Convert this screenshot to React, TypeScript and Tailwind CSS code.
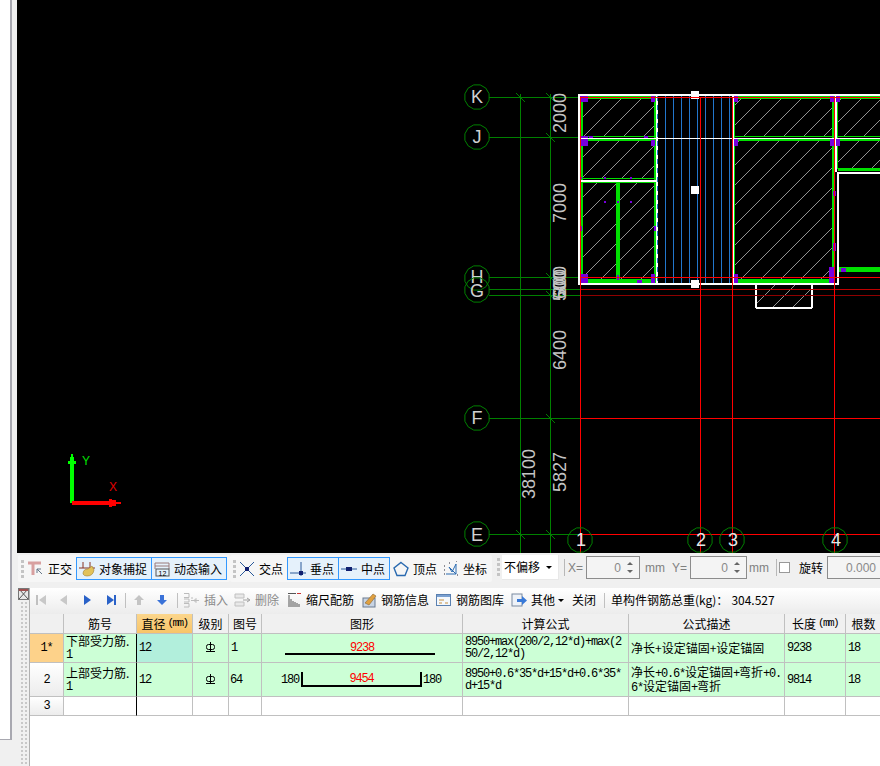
import type { ReactNode } from 'react';

const mono = "font-['Liberation_Mono',monospace] tracking-[-1.2px]";

function gon(cx: number, cy: number, r: number) {
  const pts: string[] = [];
  for (let i = 0; i < 12; i++) {
    const a = (Math.PI * 2 * i) / 12 + 0.26;
    pts.push(`${(cx + r * Math.cos(a)).toFixed(1)},${(cy + r * Math.sin(a)).toFixed(1)}`);
  }
  return pts.join(' ');
}

const rowAxes: [string, number, number][] = [
  ['K', 97, 103],
  ['J', 137, 143],
  ['H', 278, 283],
  ['G', 290, 297],
  ['F', 418, 424],
  ['E', 534, 541],
];
const colAxes: [string, number][] = [
  ['1', 580],
  ['2', 700],
  ['3', 732],
  ['4', 835],
];
const purple: number[][] = [
  [580, 96, 8, 6], [651, 96, 4, 6], [580, 136, 8, 10], [651, 140, 4, 6], [589, 136, 4, 2], [644, 136, 4, 2],
  [580, 177, 2, 2], [604, 177, 2, 2], [630, 177, 2, 2], [604, 201, 2, 2], [617, 201, 2, 2], [630, 201, 2, 2],
  [580, 226, 2, 5], [654, 226, 2, 5], [580, 274, 8, 9], [651, 274, 4, 9], [617, 275, 2, 5], [637, 280, 5, 3],
  [734, 96, 4, 6], [830, 96, 4, 6], [836, 96, 4, 6], [734, 139, 4, 7], [830, 139, 4, 7], [836, 139, 4, 7],
  [833, 191, 3, 5], [833, 243, 3, 8], [734, 274, 4, 9], [829, 267, 5, 16], [841, 268, 5, 4],
];
const green: number[][] = [
  [581, 96, 75, 3], [581, 97, 2, 186], [654, 97, 2, 186], [581, 136, 75, 1], [581, 139, 75, 2], [581, 178, 75, 1],
  [581, 182, 75, 1], [616, 182, 4, 98], [581, 279, 75, 4], [733, 96, 147, 3], [733, 97, 2, 186], [832, 97, 2, 186],
  [837, 97, 1, 72], [733, 136, 147, 1], [733, 139, 147, 2], [838, 168, 42, 3], [838, 267, 42, 5], [738, 279, 91, 4],
];
const white: number[][] = [
  [578, 94, 302, 2], [578, 94, 2, 190], [656, 94, 2, 190], [732, 94, 2, 190], [578, 138, 302, 1], [580, 180, 76, 2],
  [578, 283, 260, 2], [835, 94, 2, 78], [837, 172, 2, 113], [837, 172, 43, 2], [755, 285, 2, 23], [811, 285, 2, 23],
  [756, 307, 56, 2], [691, 91, 8, 3], [691, 96, 8, 3], [691, 186, 8, 8], [691, 280, 8, 3], [691, 285, 8, 3],
];
const hatch: number[][] = [
  [583, 99, 71, 37], [583, 141, 71, 37], [583, 183, 33, 96], [620, 183, 34, 96], [735, 99, 97, 37], [735, 141, 97, 138],
  [838, 99, 42, 37], [838, 141, 42, 27], [757, 285, 54, 22],
];
const dims: [string, number, number][] = [
  ['2000', 560, 113], ['7000', 560, 203], ['600', 560, 284], ['300', 560, 281], ['500', 560, 286], ['6400', 560, 350], ['5827', 560, 472], ['38100', 529, 474],
];
const ticks: [number, number][] = [[520, 97], [550, 97], [550, 137], [550, 277], [550, 295], [550, 418], [550, 534], [520, 534]];

function Drawing() {
  return (
    <svg className="block" width="863" height="553" viewBox="17 0 863 553">
      <defs>
        <pattern id="hatch" patternUnits="userSpaceOnUse" width="20" height="20">
          <path d="M0 20 L20 0" stroke="#b8b8b8" strokeWidth="0.8" />
        </pattern>
      </defs>
      {hatch.map(([x, y, w, h], i) => <rect key={i} x={x} y={y} width={w} height={h} fill="url(#hatch)" />)}
      {[665, 673, 681, 689, 697, 705, 713, 721, 729].map((x) => <rect key={x} x={x} y={96} width={1} height={187} fill="#2277cc" />)}
      {[97, 137, 277, 289, 295, 418, 534].map((y) => <rect key={y} x={489} y={y} width={91} height={1} fill="#008000" />)}
      <rect x={520} y={94} width={1} height={459} fill="#008000" />
      <rect x={550} y={94} width={1} height={459} fill="#008000" />
      {ticks.map(([x, y], i) => <line key={i} x1={x - 4} y1={y - 4} x2={x + 5} y2={y + 5} stroke="#008000" />)}
      {green.map(([x, y, w, h], i) => <rect key={i} x={x} y={y} width={w} height={h} fill="#00e000" />)}
      {white.map(([x, y, w, h], i) => <rect key={i} x={x} y={y} width={w} height={h} fill="#ffffff" />)}
      <line x1="657.5" y1="96" x2="657.5" y2="283" stroke="#2277cc" strokeDasharray="5 4" />
      {purple.map(([x, y, w, h], i) => <rect key={i} x={x} y={y} width={w} height={h} fill="#7700dd" />)}
      {[97, 277, 418, 534].map((y) => <rect key={y} x={580} y={y} width={300} height={1} fill="#ff0000" />)}
      <rect x={580} y={289} width={300} height={1} fill="#c00000" />
      <rect x={580} y={295} width={300} height={1} fill="#900000" />
      <rect x={578} y={138} width={302} height={1} fill="#ffffff" />
      {[580, 700, 732, 834].map((x) => <rect key={x} x={x} y={97} width={1} height={456} fill="#ff0000" />)}
      {dims.map(([t, x, y]) => (
        <text key={t} x={x} y={y} transform={`rotate(-90 ${x} ${y})`} textAnchor="middle" dominantBaseline="central" fill="#c4c4c4" fontSize="18" fontFamily="Liberation Sans, sans-serif">{t}</text>
      ))}
      {rowAxes.map(([t, y, base]) => (
        <g key={t}>
          <polygon points={gon(477, y, 12.5)} fill="none" stroke="#008000" />
          <text x={477} y={base} textAnchor="middle" fill="#d0d0d0" fontSize="18" fontFamily="Liberation Sans, sans-serif">{t}</text>
        </g>
      ))}
      {colAxes.map(([t, x]) => (
        <g key={t}>
          <polygon points={gon(x, 540, 12.5)} fill="none" stroke="#008000" />
          <text x={x + 1} y={546} textAnchor="middle" fill="#e0e8e8" fontSize="18" fontFamily="Liberation Sans, sans-serif">{t}</text>
        </g>
      ))}
      <path d="M70 503 V464 H68 V461 H70 V457 H71 V454 H73 V457 H74 V461 H76 V464 H74 V503 Z" fill="#00ff00" />
      <path d="M72 501 H109 V499 H112 V500 H116 V502 H121 V504 H116 V506 H112 V507 H109 V505 H72 Z" fill="#ff0000" />
      <text x={86} y={465} textAnchor="middle" fill="#00e000" fontSize="12" fontFamily="Liberation Sans, sans-serif">Y</text>
      <text x={113} y={491} textAnchor="middle" fill="#e00000" fontSize="12" fontFamily="Liberation Sans, sans-serif">X</text>
    </svg>
  );
}

function Grip() {
  return (
    <div className="flex flex-col gap-[2px] w-[3px] shrink-0">
      <span className="h-[3px] bg-[#c4c4c4]" />
      <span className="h-[3px] bg-[#c4c4c4]" />
      <span className="h-[3px] bg-[#c4c4c4]" />
      <span className="h-[3px] bg-[#c4c4c4]" />
    </div>
  );
}

function Ico({ children, w = 16 }: { children: ReactNode; w?: number }) {
  return (
    <svg width={w} height="16" viewBox={`0 0 ${w} 16`} className="block shrink-0" fill="none">
      {children}
    </svg>
  );
}

function Btn({ icon, label, className, active }: { icon: ReactNode; label: string; className: string; active?: boolean }) {
  return (
    <div className={`flex items-center h-[23px] gap-[4px] shrink-0 ${active ? 'border border-[#3399ff] bg-[#e5f1fb] pl-[2px]' : ''} ${className}`}>
      {icon}
      <span className="whitespace-nowrap">{label}</span>
    </div>
  );
}

function Spinner({ value, className }: { value: string; className: string }) {
  return (
    <div className={`flex items-center h-[23px] border border-[#8c8c8c] bg-[#f4f4f4] text-[#8a8a8a] shrink-0 ${className}`}>
      <span className="text-[12px] font-['Liberation_Sans',sans-serif]">{value}</span>
      <div className="flex flex-col gap-[5px] w-[18px] items-center">
        <span className="w-0 h-0 border-x-[3px] border-x-transparent border-b-[3px] border-b-[#666]" />
        <span className="w-0 h-0 border-x-[3px] border-x-transparent border-t-[3px] border-t-[#666]" />
      </div>
    </div>
  );
}

function TopToolbar() {
  return (
    <div className="flex items-start h-[35px] pt-[2px] bg-[#f0f0f0] text-[12px] text-black">
      <div className="flex items-center h-[27px] w-[212px] ml-px pl-[3px] bg-[#f6f6f6] rounded-[2px] shrink-0">
        <Grip />
        <Btn
          className="ml-[4px] w-[48px]"
          label="正交"
          icon={
            <Ico>
              <path d="M0 2 H13 M5 2 V14" stroke="#d8a0a0" strokeWidth="3" />
              <path d="M9 8 L14 13 M9 8 V12 M9 8 H13" stroke="#667788" />
            </Ico>
          }
        />
        <Btn
          active
          className="w-[76px]"
          label="对象捕捉"
          icon={
            <Ico>
              <path d="M0 7 H16 M4 1 V7 M11 1 V7" stroke="#883322" />
              <path d="M4 13 Q4 8 9 8 L13 5 L15 9 Q14 15 8 15 Q5 15 4 13 Z" fill="#e2c25a" stroke="#a08030" strokeWidth="0.6" />
            </Ico>
          }
        />
        <Btn
          active
          className="-ml-px w-[76px]"
          label="动态输入"
          icon={
            <Ico>
              <path d="M1 2 H15 M1 5 H15 M1 2 V8 M15 2 V8" stroke="#9a7a7a" />
              <rect x="2" y="8" width="13" height="7" stroke="#555" />
              <text x="8.5" y="14.5" textAnchor="middle" fontSize="7" fill="#000" fontFamily="Liberation Sans, sans-serif">12</text>
            </Ico>
          }
        />
      </div>
      <div className="flex items-center h-[27px] w-[262px] pl-[3px] bg-[#f6f6f6] rounded-[2px] shrink-0">
        <Grip />
        <Btn
          className="ml-[3px] w-[48px]"
          label="交点"
          icon={
            <Ico>
              <path d="M1 1 L15 15 M15 1 L1 15" stroke="#2a5a9a" />
              <rect x="6" y="6" width="4" height="4" fill="#102070" />
            </Ico>
          }
        />
        <Btn
          active
          className="w-[52px]"
          label="垂点"
          icon={
            <Ico>
              <path d="M0 12 H16 M11 1 V15" stroke="#2a5a9a" />
              <rect x="9" y="10" width="4" height="4" fill="#102070" />
            </Ico>
          }
        />
        <Btn
          active
          className="-ml-px w-[52px]"
          label="中点"
          icon={
            <Ico>
              <path d="M0 8 H16" stroke="#2a5a9a" />
              <rect x="5" y="6" width="6" height="4" fill="#102070" />
            </Ico>
          }
        />
        <Btn
          className="ml-[3px] w-[50px]"
          label="顶点"
          icon={
            <Ico>
              <path d="M8 1.5 L15 7 L12 14.5 H4 L1 7 Z" stroke="#2a6ab0" strokeWidth="1.4" />
            </Ico>
          }
        />
        <Btn
          className="w-[46px]"
          label="坐标"
          icon={
            <Ico>
              <path d="M3 13 H13 L6 6 L9 11 L13 3 V13" stroke="#2a6ab0" />
              <path d="M1 5 H3 M1 13 H3 M6 2 H8 M13 0 H15 M14 14 H16 M1 9 H3" stroke="#223" strokeDasharray="1 1" />
            </Ico>
          }
        />
      </div>
      <div className="ml-[5px] mt-[3px] shrink-0"><Grip /></div>
      <div className="flex items-center justify-between w-[57px] h-[25px] ml-[2px] pl-[2px] pr-[6px] bg-white border-r border-b border-[#e8e8e8] shrink-0">
        <span>不偏移</span>
        <span className="w-0 h-0 border-x-[3px] border-x-transparent border-t-[3px] border-t-black" />
      </div>
      <div className="flex items-center h-[25px] ml-[5px] text-[#808080] shrink-0">
        <span className="w-px h-[17px] bg-[#b8b8b8]" />
        <span className="ml-[3px] w-[18px] text-[12px] font-['Liberation_Sans',sans-serif]">X=</span>
        <Spinner value="0" className="w-[54px] justify-end" />
        <span className="ml-[5px] w-[27px] text-[12px] font-['Liberation_Sans',sans-serif]">mm</span>
        <span className="w-[18px] text-[12px] font-['Liberation_Sans',sans-serif]">Y=</span>
        <Spinner value="0" className="w-[57px] justify-end" />
        <span className="ml-[2px] w-[27px] text-[12px] font-['Liberation_Sans',sans-serif]">mm</span>
        <span className="w-px h-[17px] bg-[#b8b8b8] mr-[2px]" />
        <span className="w-[11px] h-[11px] border border-[#999] bg-white" />
        <span className="ml-[9px] text-black">旋转</span>
        <Spinner value="0.000" className="ml-[4px] w-[70px] justify-start pl-[18px]" />
      </div>
    </div>
  );
}

function Sep() {
  return <span className="block w-px h-[15px] bg-[#c0c0c0] shrink-0" />;
}

function SecondToolbar() {
  return (
    <div className="flex items-center h-[26px] pb-[2px] bg-gradient-to-b from-[#ffffff] to-[#ececec] text-[12px] text-black whitespace-nowrap">
      <svg width="12" height="14" viewBox="0 0 12 14" className="block ml-[5px] shrink-0">
        <rect x="1" y="2" width="2" height="10" fill="#c0c0c0" />
        <path d="M11 2 V12 L4 7 Z" fill="#c8c8c8" />
      </svg>
      <svg width="10" height="14" viewBox="0 0 10 14" className="block ml-[12px] shrink-0">
        <path d="M8 2 V12 L1 7 Z" fill="#c8c8c8" />
      </svg>
      <svg width="10" height="14" viewBox="0 0 10 14" className="block ml-[14px] shrink-0">
        <path d="M1 2 V12 L8 7 Z" fill="#2a62c8" />
      </svg>
      <svg width="12" height="14" viewBox="0 0 12 14" className="block ml-[13px] shrink-0">
        <path d="M1 2 V12 L8 7 Z" fill="#2a62c8" />
        <rect x="8" y="2" width="2" height="10" fill="#2a62c8" />
      </svg>
      <span className="ml-[7px]"><Sep /></span>
      <svg width="12" height="12" viewBox="0 0 12 12" className="block ml-[7px] shrink-0">
        <path d="M6 1 L11 6 H8 V11 H4 V6 H1 Z" fill="#c4c4c4" />
      </svg>
      <svg width="12" height="12" viewBox="0 0 12 12" className="block ml-[11px] shrink-0">
        <path d="M6 11 L11 6 H8 V1 H4 V6 H1 Z" fill="#3a72d8" />
      </svg>
      <span className="ml-[9px]"><Sep /></span>
      <svg width="17" height="16" viewBox="0 0 17 16" className="block ml-[5px] shrink-0">
        <path d="M1 1.5 H6 V5.5 H1 M1 7 H6 V10 H1 M1 11.5 H6 V15 H1 M8 6 H10 M10 8.5 H16 M8 8.5 H11 L13 6.5 V10.5 L11 8.5" stroke="#bcbcbc" fill="none" />
      </svg>
      <span className="ml-[4px] w-[24px] text-[#8a8a8a]">插入</span>
      <svg width="17" height="16" viewBox="0 0 17 16" className="block ml-[6px] shrink-0">
        <path d="M1 2 H10 V6 H1 Z M1 10 H10 V14 H1 Z" fill="#e8e8e8" stroke="#c0c0c0" />
        <path d="M9 8 H15 M13 6 L16 8 L13 10" stroke="#a0a0a0" fill="none" />
      </svg>
      <span className="ml-[4px] w-[24px] text-[#8a8a8a]">删除</span>
      <svg width="13" height="15" viewBox="0 0 13 15" className="block ml-[9px] shrink-0">
        <path d="M0 0.5 H8 M1 2 V14 M3 6 V14 M5 8 V14 M7 9 V14 M9 10 V14 M11 11 V14" stroke="#555" fill="none" />
        <path d="M9 0.5 H13" stroke="#cc3333" />
      </svg>
      <span className="ml-[5px] w-[48px]">缩尺配筋</span>
      <svg width="15" height="15" viewBox="0 0 15 15" className="block ml-[8px] shrink-0">
        <rect x="1" y="5" width="12" height="9" fill="#c8d4e4" stroke="#6a7a90" />
        <path d="M3 10 L11 1 L14 3 L7 12 Z" fill="#e0a040" stroke="#886633" strokeWidth="0.6" />
      </svg>
      <span className="ml-[4px] w-[48px]">钢筋信息</span>
      <svg width="15" height="14" viewBox="0 0 15 14" className="block ml-[7px] shrink-0">
        <rect x="0.5" y="1.5" width="14" height="11" fill="#f4f8fc" stroke="#5a80b0" />
        <rect x="1" y="2" width="13" height="2" fill="#7aa0d0" />
        <path d="M3 7 H8 M3 10 H6 M9 10 H12" stroke="#c89040" />
      </svg>
      <span className="ml-[5px] w-[48px]">钢筋图库</span>
      <svg width="16" height="15" viewBox="0 0 16 15" className="block ml-[7px] shrink-0">
        <rect x="1" y="1" width="10" height="12" fill="#eef2f8" stroke="#7a8aa0" />
        <path d="M6 6 H11 V3 L16 7.5 L11 12 V9 H6 Z" fill="#3a7ad8" />
      </svg>
      <span className="ml-[4px] w-[24px]">其他</span>
      <span className="ml-[3px] w-0 h-0 border-x-[3px] border-x-transparent border-t-[3px] border-t-black" />
      <span className="ml-[8px] w-[24px]">关闭</span>
      <span className="ml-[8px]"><Sep /></span>
      <span className="ml-[6px]">单构件钢筋总重(kg)：<span className="ml-[3px]">304.527</span></span>
    </div>
  );
}

function M({ children, className = '' }: { children: ReactNode; className?: string }) {
  return <span className={`${mono} ${className}`}>{children}</span>;
}

function Grade() {
  return (
    <svg width="11" height="12" viewBox="0 0 11 12" className="block">
      <rect x="1.5" y="2.5" width="8" height="5" rx="2" stroke="#000" fill="none" />
      <path d="M5.5 0 V10 M1 9.5 H10" stroke="#000" />
    </svg>
  );
}

const head = 'flex items-center justify-center border-r border-b border-[#c0c0c0] bg-[#f0f0f0] text-[12px] text-black whitespace-nowrap';
const cell = 'flex items-center border-r border-b border-[#c0c0c0] text-[12px] leading-[12px] text-black whitespace-nowrap min-w-0';
const green2 = 'bg-[#ccffd6]';
const rowHead = 'justify-center bg-gradient-to-b from-[#ffffff] to-[#ececec]';

function Table() {
  return (
    <div className="grid grid-cols-[34px_73px_56px_36px_33px_201px_166px_156px_61px_36px] grid-rows-[20px_29px_34px_19px] w-[850px] overflow-hidden font-['Noto_Sans_CJK_SC',sans-serif]">
      <div className={head} />
      <div className={head}>筋号</div>
      <div className={`${head} bg-gradient-to-b from-[#fbd68c] to-[#f8c468] text-[#800080]`}>
        直径<M className="ml-[2px] text-[11px] tracking-[-1.6px]">(mm)</M>
      </div>
      <div className={head}>级别</div>
      <div className={head}>图号</div>
      <div className={head}>图形</div>
      <div className={head}>计算公式</div>
      <div className={head}>公式描述</div>
      <div className={head}>长度<M className="ml-[2px] text-[11px] tracking-[-1.6px]">(mm)</M></div>
      <div className={head}>根数</div>

      <div className={`${cell} justify-center bg-[#fdd28a] text-[#4b0082]`}><M>1*</M></div>
      <div className={`${cell} ${green2} pl-[2px] border-r-black`}><div>下部受力筋.<br /><M>1</M></div></div>
      <div className={`${cell} bg-[#b2efdc] pl-[2px]`}><M>12</M></div>
      <div className={`${cell} ${green2} justify-center`}><Grade /></div>
      <div className={`${cell} ${green2} pl-[2px]`}><M>1</M></div>
      <div className={`${cell} ${green2} flex-col justify-end pb-[7px]`}>
        <M className="text-[#ff0000] -mb-[1px]">9238</M>
        <div className="w-[150px] h-[2px] mr-[4px] bg-black" />
      </div>
      <div className={`${cell} ${green2} pl-[2px]`}><M>8950+max(200/2,12*d)+max(2<br />50/2,12*d)</M></div>
      <div className={`${cell} ${green2} pl-[2px]`}>净长+设定锚固+设定锚固</div>
      <div className={`${cell} ${green2} pl-[2px]`}><M>9238</M></div>
      <div className={`${cell} ${green2} pl-[2px]`}><M>18</M></div>

      <div className={`${cell} ${rowHead}`}><M>2</M></div>
      <div className={`${cell} ${green2} pl-[2px] border-r-black`}><div>上部受力筋.<br /><M>1</M></div></div>
      <div className={`${cell} ${green2} pl-[2px]`}><M>12</M></div>
      <div className={`${cell} ${green2} justify-center`}><Grade /></div>
      <div className={`${cell} ${green2} pl-[1px]`}><M>64</M></div>
      <div className={`${cell} ${green2} pl-[19px]`}>
        <M>180</M>
        <div className="flex items-center justify-center w-[121px] h-[15px] ml-[2px] border-2 border-t-0 border-black">
          <M className="text-[#ff0000]">9454</M>
        </div>
        <M className="ml-[1px]">180</M>
      </div>
      <div className={`${cell} ${green2} pl-[2px]`}><M>8950+0.6*35*d+15*d+0.6*35*<br />d+15*d</M></div>
      <div className={`${cell} ${green2} pl-[2px]`}>
        <div>净长<M>+0.6*</M>设定锚固<M>+</M>弯折<M>+0.</M><br /><M>6*</M>设定锚固<M>+</M>弯折</div>
      </div>
      <div className={`${cell} ${green2} pl-[2px]`}><M>9814</M></div>
      <div className={`${cell} ${green2} pl-[2px]`}><M>18</M></div>

      <div className={`${cell} ${rowHead}`}><M>3</M></div>
      <div className={`${cell} bg-white border-r-black`} />
      <div className={`${cell} bg-white`} />
      <div className={`${cell} bg-white`} />
      <div className={`${cell} bg-white`} />
      <div className={`${cell} bg-white`} />
      <div className={`${cell} bg-white`} />
      <div className={`${cell} bg-white`} />
      <div className={`${cell} bg-white`} />
      <div className={`${cell} bg-white`} />
    </div>
  );
}

export default function App() {
  return (
    <div className="flex w-[880px] h-[766px] overflow-hidden bg-white font-['Noto_Sans_CJK_SC',sans-serif]">
      <div className="flex flex-col w-[17px] shrink-0 bg-[#f0f0f0]">
        <div className="flex h-[739px]">
          <div className="w-[10px] bg-white" />
          <div className="w-[2px] bg-[#a8a8b0]" />
        </div>
        <div className="w-[12px] h-px bg-[#a8a8b0]" />
      </div>
      <div className="flex flex-col w-[863px]">
        <div className="h-[553px] bg-black shrink-0">
          <Drawing />
        </div>
        <TopToolbar />
        <div className="flex flex-1 min-h-0">
          <div className="flex flex-col w-[13px] shrink-0 bg-[#f0f0f0] border-r border-[#b0b0b0]">
            <svg width="12" height="13" viewBox="0 0 12 13" className="block ml-px shrink-0">
              <rect x="0.5" y="0.5" width="10" height="11" fill="#e8e8e8" stroke="#777" />
              <path d="M1 1 L10 11 M10 1 L1 11" stroke="#555" />
              <rect x="1" y="1" width="9" height="2" fill="#a05050" />
            </svg>
            <svg width="12" height="165" className="block mt-px shrink-0">
              <defs>
                <pattern id="dots" patternUnits="userSpaceOnUse" width="4" height="4">
                  <rect x="0" y="0" width="2" height="2" fill="#c8c8c8" />
                </pattern>
              </defs>
              <rect x="2" y="0" width="8" height="165" fill="url(#dots)" />
            </svg>
          </div>
          <div className="flex flex-col flex-1 min-w-0 bg-white">
            <SecondToolbar />
            <Table />
          </div>
        </div>
      </div>
    </div>
  );
}
